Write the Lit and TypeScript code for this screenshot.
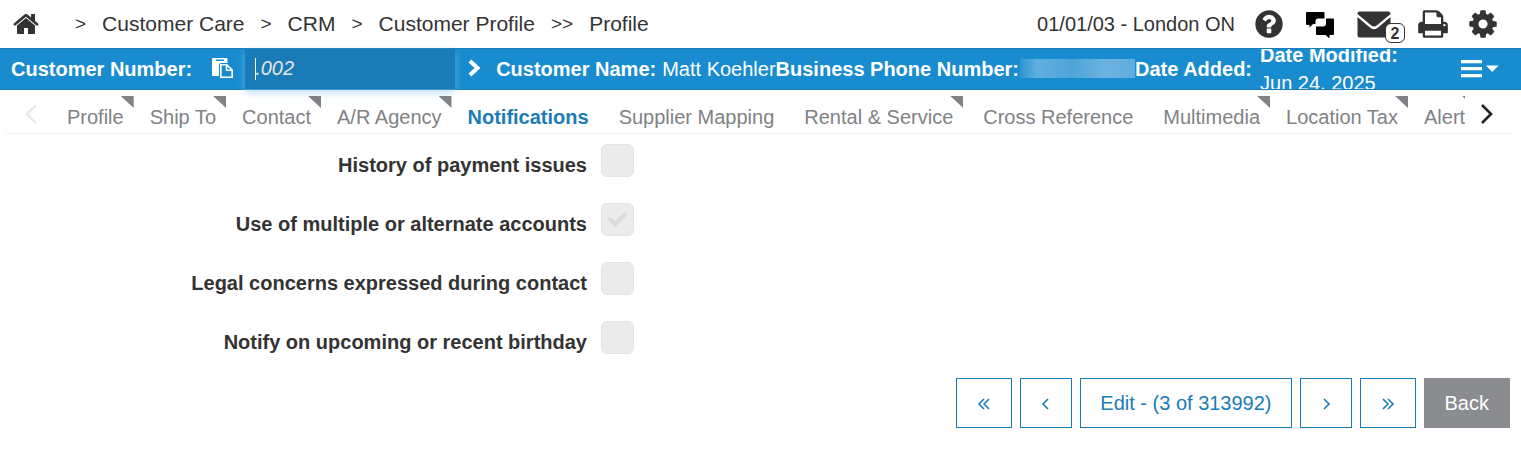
import { LitElement, html, css } from "lit";
import { customElement, state } from "lit/decorators.js";
import { classMap } from "lit/directives/class-map.js";

const HOME = "M1408 992v480q0 26-19 45t-45 19h-384v-384h-256v384h-384q-26 0-45-19t-19-45v-480q0-1 .5-3t.5-3l575-474 575 474q1 2 1 6zm223-69l-62 74q-8 9-21 11h-3q-13 0-21-7l-692-577-692 577q-12 8-24 7-13-2-21-11l-62-74q-8-10-7-23.5t11-21.5l719-599q32-26 76-26t76 26l244 204v-195q0-14 9-23t23-9h192q14 0 23 9t9 23v408l219 182q10 8 11 21.5t-7 23.5z";
const HELP = "M1024 1376v-192q0-14-9-23t-23-9h-192q-14 0-23 9t-9 23v192q0 14 9 23t23 9h192q14 0 23-9t9-23zm256-672q0-88-55.5-163t-138.5-116-170-41q-243 0-371 213-15 24 8 42l132 100q7 6 19 6 16 0 25-12 53-68 86-92 34-24 86-24 48 0 85.5 26t37.5 59q0 38-20 61t-68 45q-63 28-115.5 86.5t-52.5 125.5v36q0 14 9 23t23 9h192q14 0 23-9t9-23q0-19 21.5-49.5t54.5-49.5q32-18 49-28.5t46-35 44.5-48 28-60.5 12.5-81zm384 192q0 209-103 385.5t-279.5 279.5-385.5 103-385.5-103-279.5-279.5-103-385.5 103-385.5 279.5-279.5 385.5-103 385.5 103 279.5 279.5 103 385.5z";
const PRINT = "M448 1536h896v-256h-896v256zm0-640h896v-384h-160q-40 0-68-28t-28-68v-160h-640v640zm1152 64q0-26-19-45t-45-19-45 19-19 45 19 45 45 19 45-19 19-45zm128 0v416q0 13-9.5 22.5t-22.5 9.5h-224v160q0 40-28 68t-68 28h-960q-40 0-68-28t-28-68v-160h-224q-13 0-22.5-9.5t-9.5-22.5v-416q0-79 56.5-135.5t135.5-56.5h64v-544q0-40 28-68t68-28h672q40 0 88 20t76 48l152 152q28 28 48 76t20 88v256h64q79 0 135.5 56.5t56.5 135.5z";
const COG = "M1152 896q0-106-75-181t-181-75-181 75-75 181 75 181 181 75 181-75 75-181zm512-109v222q0 12-8 23t-20 13l-185 28q-19 54-39 91 35 50 107 138 10 12 10 25t-9 23q-27 37-99 108t-94 71q-12 0-26-9l-138-108q-44 23-91 38-16 136-29 186-7 28-36 28h-222q-14 0-24.5-8.5t-11.5-21.5l-28-184q-49-16-90-37l-141 107q-10 9-25 9-14 0-25-11-126-114-165-168-7-10-7-23 0-12 8-23 15-21 51-66.5t54-70.5q-27-50-41-99l-183-27q-13-2-21-12.5t-8-23.5v-222q0-12 8-23t19-13l186-28q14-46 39-92-40-57-107-138-10-12-10-24 0-10 9-23 26-36 98.5-107.5t94.5-71.5q13 0 26 10l138 107q44-23 91-38 16-136 29-186 7-28 36-28h222q14 0 24.5 8.5t11.5 21.5l28 184q49 16 90 37l142-107q9-9 24-9 13 0 25 10 129 119 165 170 7 8 7 22 0 12-8 23-15 21-51 66.5t-54 70.5q26 50 41 98l183 28q13 2 21 12.5t8 23.5z";

const glyph = (d: string, size: number) =>
  html`<svg width=${size} height=${size} viewBox="0 0 1792 1792" aria-hidden="true"><path fill="currentColor" d=${d}></path></svg>`;

const stroke = (d: string, w: number, h: number, weight: number) =>
  html`<svg width=${w} height=${h} viewBox="0 0 ${w} ${h}" aria-hidden="true"><path fill="none" stroke="currentColor" stroke-width=${weight} d=${d}></path></svg>`;

interface Tab {
  label: string;
  flag?: boolean;
  wide?: boolean;
}

const TABS: Tab[] = [
  { label: "Profile", flag: true },
  { label: "Ship To", flag: true },
  { label: "Contact", flag: true },
  { label: "A/R Agency", flag: true },
  { label: "Notifications", wide: true },
  { label: "Supplier Mapping", wide: true },
  { label: "Rental & Service", flag: true, wide: true },
  { label: "Cross Reference", wide: true },
  { label: "Multimedia", flag: true },
  { label: "Location Tax", flag: true },
  { label: "Alert", flag: true },
];

const OPTIONS = [
  { id: "history", label: "History of payment issues", on: false },
  { id: "accounts", label: "Use of multiple or alternate accounts", on: true },
  { id: "legal", label: "Legal concerns expressed during contact", on: false },
  { id: "birthday", label: "Notify on upcoming or recent birthday", on: false },
];

@customElement("crm-header")
class CrmHeader extends LitElement {
  static styles = css`
    :host { display: block; }
    .top { display: flex; align-items: center; height: 48px; padding: 0 22px 0 13px; color: #333; }
    a { color: inherit; text-decoration: none; }
    svg { display: block; }
    .crumbs { display: flex; align-items: center; gap: 16px; flex: 1; font-size: 21px; line-height: 24px; white-space: nowrap; }
    .home { margin-right: 18px; }
    .sep { font-size: 19px; }
    .place { font-size: 20px; line-height: 24px; margin-right: 18px; white-space: nowrap; }
    .tools { display: flex; align-items: center; }
    .tools button { border: 0; padding: 0; background: none; color: #333; font: inherit; position: relative; }
    .tools .chat { margin-left: 20px; }
    .tools .mail { margin-left: 22px; }
    .tools .print { margin-left: 26px; }
    .tools .gear { margin-left: 18px; }
    .count { position: absolute; left: 28px; top: 13px; box-sizing: border-box; width: 20px; height: 20px; border: 1px solid #333; border-radius: 6px; background: #fff; font-size: 16px; line-height: 20px; font-weight: bold; text-align: center; }
  `;

  render() {
    return html`
      <header class="top">
        <nav class="crumbs" aria-label="Breadcrumb">
          <a class="home" href="#" aria-label="Home">${glyph(HOME, 28)}</a>
          <span class="sep">&gt;</span><a href="#">Customer Care</a>
          <span class="sep">&gt;</span><a href="#">CRM</a>
          <span class="sep">&gt;</span><a href="#">Customer Profile</a>
          <span class="sep">&gt;&gt;</span><a href="#">Profile</a>
        </nav>
        <span class="place">01/01/03 - London ON</span>
        <div class="tools">
          <button aria-label="Help">${glyph(HELP, 32)}</button>
          <button class="chat" aria-label="Chat">
            <svg width="30" height="28" viewBox="0 0 30 28">
              <path fill="#000" d="M2 2h16.500a1 1 0 0 1 1 1v5.500h-6a3 3 0 0 0-3 3v2.500H8l-3.500 3.500V15H2a1 1 0 0 1-1-1V3a1 1 0 0 1 1-1z"></path>
              <path fill="#000" d="M21 8.500h7a1 1 0 0 1 1 1V24a1 1 0 0 1-1 1h-3.500v3.500L20.500 25H12a1 1 0 0 1-1-1v-7.500h7a3 3 0 0 0 3-3z"></path>
            </svg>
          </button>
          <button class="mail" aria-label="Messages, 2 unread">
            <svg width="34" height="28" viewBox="0 0 34 28">
              <path fill="currentColor" d="M2.500 1.500h29a2 2 0 0 1 1.800 2.800L20 15.300q-3 2.600-6 0L.7 4.300a2 2 0 0 1 1.800-2.800z"></path>
              <path fill="currentColor" d="M.5 7l13 11q3.500 2.600 7 0l13-11v18.500a2 2 0 0 1-2 2h-29a2 2 0 0 1-2-2z"></path>
            </svg>
            <span class="count">2</span>
          </button>
          <button class="print" aria-label="Print">${glyph(PRINT, 32)}</button>
          <button class="gear" aria-label="Settings">${glyph(COG, 32)}</button>
        </div>
      </header>
    `;
  }
}

@customElement("crm-record-bar")
class CrmRecordBar extends LitElement {
  static styles = css`
    :host { display: block; position: relative; }
    .bar { display: flex; align-items: center; box-sizing: border-box; height: 42px; padding: 0 22px 0 11px; background: #188ccf; border-top: 1px solid #1a7cb7; border-bottom: 1px solid #1a7cb7; color: #fff; font-size: 20px; line-height: 28px; white-space: nowrap; }
    svg { display: block; }
    button { border: 0; padding: 0; background: none; color: inherit; }
    .name { font-weight: bold; }
    .paste { margin: 0 11px 0 20px; }
    .number { box-sizing: border-box; align-self: stretch; width: 210px; border: 0; border-radius: 0; margin: 0; padding: 0 10px 2px; outline: none; background: linear-gradient(#fff, #fff) 10px 9px / 1px 22px no-repeat #1a7cb7; color: #e4e4e4; font: italic 20px/28px "Liberation Sans", Arial, sans-serif; box-shadow: 0 3px 8px rgba(127, 196, 238, 0.6); }
    .go { margin: 0 15px 0 13px; }
    .gap { margin-left: 6px; }
    .masked { width: 115px; height: 19px; margin: 0 0 2px 1px; background: linear-gradient(90deg, #2c95d3, #62aedf 15%, #4ea5da 45%, #6cb3e0 75%, #5eacdd); }
    .dates { display: flex; flex-direction: column; align-self: stretch; justify-content: center; overflow: hidden; margin-left: 8px; flex: 1; }
  `;

  render() {
    return html`
      <section class="bar">
        <label class="name" for="number">Customer Number:</label>
        <button class="paste" aria-label="Copy number">
          <svg width="22" height="24" viewBox="0 0 22 24">
            <path fill="#fff" d="M1 1h13.500a1 1 0 0 1 1 1v4H9a2 2 0 0 0-2 2v11H1a1 1 0 0 1-1-1V2a1 1 0 0 1 1-1z"></path>
            <path fill="#188ccf" d="M4 2.500h8V4H4z"></path>
            <path fill="none" stroke="#fff" stroke-width="1.600" d="M8.800 7.800h6l5.400 5.200v7.200H8.800zM14.500 7.800v5.500h5.700"></path>
          </svg>
        </button>
        <input id="number" class="number" value=".002" />
        <button class="go" aria-label="Go">${stroke("M2 3l7.500 7L2 17", 13, 22, 4)}</button>
        <span class="name">Customer Name:</span><span class="gap">Matt Koehler</span>
        <span class="name">Business Phone Number:</span><span class="masked" role="img" aria-label="Hidden"></span>
        <span class="name">Date Added:</span>
        <div class="dates"><span class="name">Date Modified:</span><span>Jun 24, 2025</span></div>
        <button aria-label="Menu">
          <svg width="38" height="18" viewBox="0 0 38 18">
            <path fill="#fff" d="M0 0h21v3.200H0zM0 7h21v3.200H0zM0 14h21v3.200H0zM25 5.500h12.500l-6.200 6.500z"></path>
          </svg>
        </button>
      </section>
    `;
  }
}

@customElement("crm-tabs")
class CrmTabs extends LitElement {
  @state() private active = "Notifications";

  static styles = css`
    :host { display: block; }
    .strip { display: flex; align-items: center; height: 43px; margin: 0 8px 0 6px; border-bottom: 1px solid #eee; }
    button { border: 0; padding: 0; background: none; font: inherit; color: #222; }
    svg { display: block; }
    .prev { margin: 4px 29px 0 19px; color: #e8e8e8; }
    .next { margin: 4px 20px 0 15px; }
    .list { display: flex; flex: 1; min-width: 0; overflow: hidden; align-self: stretch; }
    .tab { position: relative; flex: none; padding: 10px 10px 0 0; margin-right: 16px; color: #808285; font-size: 20px; line-height: 32px; white-space: nowrap; text-align: left; }
    .wide { margin-right: 20px; }
    .active { color: #1a7cb7; font-weight: bold; }
    .flag::after { content: ""; position: absolute; top: 6px; right: 0; width: 13px; height: 12px; background: #808285; clip-path: polygon(0 0, 100% 0, 100% 100%); }
  `;

  render() {
    return html`
      <nav class="strip">
        <button class="prev" aria-label="Previous tabs">${stroke("M11 1l-9 9 9 9", 13, 20, 2.4)}</button>
        <div class="list" role="tablist">
          ${TABS.map((t) => html`<button role="tab" aria-selected=${t.label === this.active}
            class=${classMap({ tab: true, flag: !!t.flag, wide: !!t.wide, active: t.label === this.active })}
            @click=${() => (this.active = t.label)}>${t.label}</button>`)}
        </div>
        <button class="next" aria-label="Next tabs">${stroke("M2 1l9 9-9 9", 13, 20, 2.6)}</button>
      </nav>
    `;
  }
}

@customElement("crm-notifications")
class CrmNotifications extends LitElement {
  static styles = css`
    :host { display: block; }
    .form { display: grid; row-gap: 24px; padding-top: 10px; }
    .row { display: grid; grid-template-columns: 587px auto; column-gap: 14px; justify-content: start; }
    label { padding-top: 8px; text-align: right; font-weight: bold; font-size: 20px; line-height: 27px; color: #333; }
    input { appearance: none; box-sizing: border-box; width: 33px; height: 33px; margin: 0; border: 1px solid #e4e4e4; border-radius: 6px; background: #ebebeb; display: grid; place-items: center; }
    input:checked::after { content: ""; width: 20px; height: 15px; background: #dadada; clip-path: polygon(0 50%, 14% 34%, 38% 64%, 86% 0, 100% 17%, 39% 100%); }
    .actions { display: flex; justify-content: flex-end; gap: 8px; padding: 22px 11px 0 0; }
    button { display: flex; align-items: center; justify-content: center; height: 50px; padding: 0 20px; border: 1px solid #1a7cb7; background: #fff; color: #1a7cb7; font: 20px/28px "Liberation Sans", Arial, sans-serif; white-space: nowrap; }
    .edit { padding: 0 19px; }
    .back { border-color: #8a8c8f; background: #8a8c8f; color: #fff; }
  `;

  render() {
    return html`
      <form class="form" @submit=${(e: Event) => e.preventDefault()}>
        ${OPTIONS.map((o) => html`<div class="row"><label for=${o.id}>${o.label}</label><input type="checkbox" id=${o.id} ?checked=${o.on} disabled /></div>`)}
      </form>
      <div class="actions">
        <button aria-label="First">${stroke("M7 2L2 7l5 5M12 2L7 7l5 5", 14, 13, 1.6)}</button>
        <button aria-label="Previous">${stroke("M7 2L2 7l5 5", 10, 13, 1.6)}</button>
        <button class="edit">Edit - (3 of 313992)</button>
        <button aria-label="Next">${stroke("M3 2l5 5-5 5", 10, 13, 1.6)}</button>
        <button aria-label="Last">${stroke("M2 2l5 5-5 5M7 2l5 5-5 5", 14, 13, 1.6)}</button>
        <button class="back">Back</button>
      </div>
    `;
  }
}

@customElement("app-root")
class AppRoot extends LitElement {
  static styles = css`
    :host { display: block; min-height: 100vh; background: #fff; font-family: "Liberation Sans", Arial, sans-serif; }
  `;

  render() {
    return html`
      <crm-header></crm-header>
      <crm-record-bar></crm-record-bar>
      <crm-tabs></crm-tabs>
      <crm-notifications></crm-notifications>
    `;
  }
}
